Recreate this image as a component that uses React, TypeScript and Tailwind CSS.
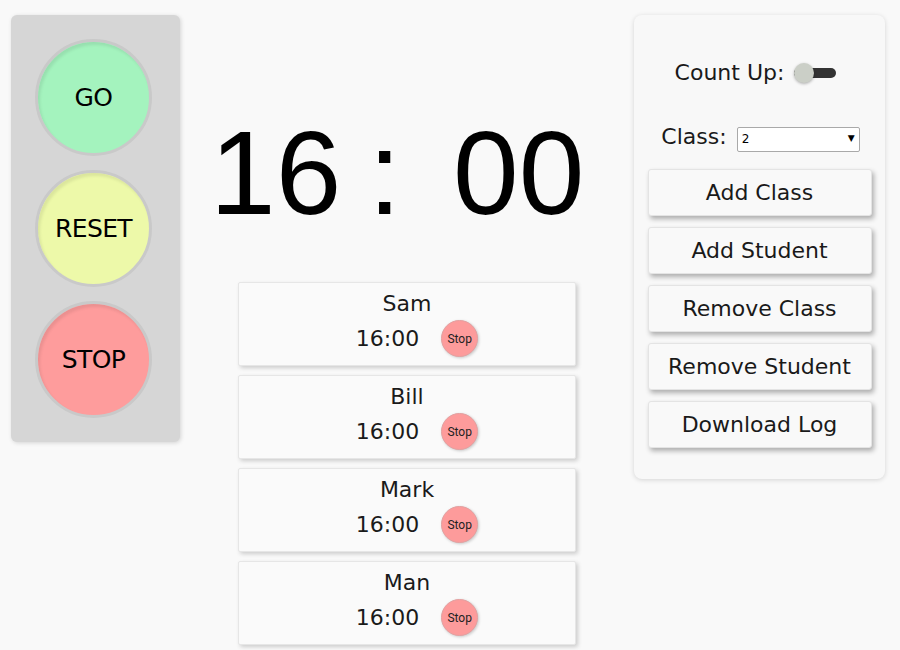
import React from 'react';

const students = ['Sam', 'Bill', 'Mark', 'Man'];
const actions = ['Add Class', 'Add Student', 'Remove Class', 'Remove Student', 'Download Log'];

const font = { fontFamily: '"DejaVu Sans", sans-serif' };

const Light = ({ label, color }: { label: string; color: string }) => (
  <button
    className={`w-[117px] h-[117px] rounded-full border-[3px] border-[#c9c9c9] text-[25px] text-black tracking-tight shadow-[inset_2px_3px_3px_rgba(0,0,0,0.08)] ${color}`}
  >
    {label}
  </button>
);

const StudentCard = ({ name }: { name: string }) => (
  <div className="w-[338px] h-[84px] bg-[#fafafa] border border-[#e6e6e6] rounded-[2px] shadow-[2px_2px_4px_rgba(0,0,0,0.18)] flex flex-col items-center pt-[8px]">
    <div className="text-[22px] leading-[26px] text-[#1a1a1a]">{name}</div>
    <div className="flex items-center mt-[3px] ml-[20px]">
      <span className="text-[22px] leading-[26px] text-[#1a1a1a]">16:00</span>
      <button
        className="ml-[22px] w-[37px] h-[37px] rounded-full bg-[#fd9b9b] border border-[#e3a0a0] text-[12px] text-[#222] shadow-[1px_1px_3px_rgba(0,0,0,0.2)]"
        style={{ fontFamily: 'Roboto, sans-serif' }}
      >
        Stop
      </button>
    </div>
  </div>
);

export default function App() {
  return (
    <div className="w-[900px] h-[650px] overflow-hidden bg-[#f9f9f9] flex items-start" style={font}>
      {/* traffic light */}
      <div className="ml-[11px] mt-[15px] w-[169px] h-[427px] bg-[#d6d6d6] rounded-[6px] shadow-[1px_1px_4px_rgba(0,0,0,0.15)] flex flex-col items-start pl-[24px] pt-[24px] gap-[14px]">
        <Light label="GO" color="bg-[#a4f3be]" />
        <Light label="RESET" color="bg-[#edf9a9]" />
        <Light label="STOP" color="bg-[#fe9c9c]" />
      </div>

      {/* clock + students */}
      <div className="w-[454px] flex flex-col items-center">
        <div
          className="mt-[114px] self-start ml-[30px] flex text-[118px] leading-none text-black"
          style={{ fontFamily: '"Liberation Sans", Arial, sans-serif' }}
        >
          <span>16</span>
          <span className="ml-[27px]">:</span>
          <span className="ml-[52px]">00</span>
        </div>
        <div className="mt-[50px] flex flex-col gap-[9px]">
          {students.map((s) => (
            <StudentCard key={s} name={s} />
          ))}
        </div>
      </div>

      {/* controls */}
      <div className="mt-[15px] w-[251px] h-[464px] bg-[#f8f8f8] rounded-[8px] shadow-[0_1px_5px_rgba(0,0,0,0.15)] flex flex-col items-center">
        <div className="mt-[41px] flex items-center ml-[-8px]">
          <span className="text-[22px] text-[#1a1a1a]">Count Up:</span>
          <div className="relative ml-[10px] w-[42px] h-[20px] flex items-center">
            <div className="w-[42px] h-[10px] rounded-full bg-[#333]" />
            <div className="absolute left-0 top-0 w-[20px] h-[20px] rounded-full bg-[#cbcfc7] shadow-[0_1px_3px_rgba(0,0,0,0.3)]" />
          </div>
        </div>
        <div className="mt-[36px] flex items-center ml-[2px]">
          <span className="text-[22px] text-[#1a1a1a] -mt-[5px]">Class:</span>
          <div className="ml-[10px] w-[123px] h-[25px] bg-white border border-[#a9a9a9] rounded-[2px] flex items-center justify-between px-[4px] text-[12px]">
            <span>2</span>
            <span className="text-[9px]">▼</span>
          </div>
        </div>
        <div className="mt-[16px] flex flex-col gap-[11px]">
          {actions.map((a) => (
            <button
              key={a}
              className="w-[224px] h-[47px] bg-[#f9f9f9] border border-[#e4e4e4] rounded-[3px] text-[22px] text-[#1a1a1a] shadow-[2px_3px_5px_rgba(0,0,0,0.3)]"
            >
              {a}
            </button>
          ))}
        </div>
      </div>
    </div>
  );
}
